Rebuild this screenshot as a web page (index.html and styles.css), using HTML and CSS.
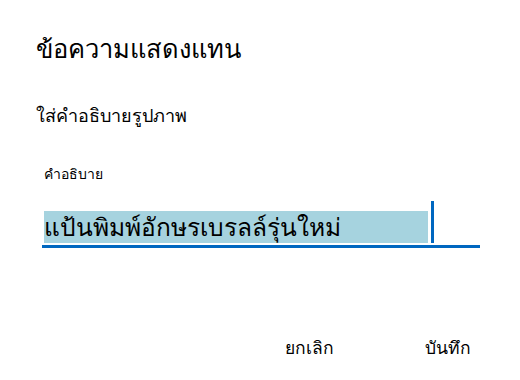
FILE: index.html
```html
<!DOCTYPE html>
<html lang="th">

<head>
    <meta charset="UTF-8">
    <title>ข้อความแสดงแทน</title>
    <link rel="stylesheet" href="styles.css">
</head>

<body>
    <div class="dialog">
        <h2 class="dialog-title">ข้อความแสดงแทน</h2>
        <p class="dialog-hint">ใส่คำอธิบายรูปภาพ</p>

        <div class="field">
            <label class="field-label">คำอธิบาย</label>
            <div class="field-input">
                <span class="selected">แป้นพิมพ์อักษรเบรลล์รุ่นใหม่</span><span class="caret"></span>
            </div>
        </div>

        <div class="actions">
            <button class="btn">ยกเลิก</button>
            <button class="btn">บันทึก</button>
        </div>
    </div>
</body>

</html>
```

FILE: styles.css
```css
* {
    margin: 0;
    padding: 0;
    box-sizing: border-box;
}

body {
    font-family: 'Noto Sans', 'DejaVu Sans', sans-serif;
    background-color: #fff;
    color: #000;
    width: 520px;
    height: 380px;
    overflow: hidden;
}

.dialog {
    padding: 30px 40px 0 36px;
    display: flex;
    flex-direction: column;
}

.dialog-title {
    font-size: 25.5px;
    font-weight: normal;
    line-height: 36px;
}

.dialog-hint {
    margin-top: 36px;
    font-size: 18px;
    line-height: 26px;
}

.field {
    margin-top: 36px;
    padding-left: 8px;
}

.field-label {
    display: block;
    font-size: 14px;
    line-height: 20px;
}

.field-input {
    margin-top: 16px;
    margin-left: -2px;
    border-bottom: 3px solid #0067c0;
    display: flex;
    align-items: flex-end;
    height: 48px;
    padding-left: 2px;
    padding-bottom: 2px;
}

.selected {
    background-color: #a6d3df;
    font-size: 24.5px;
    line-height: 32px;
    width: 384px;
    white-space: nowrap;
}

.caret {
    width: 3px;
    height: 42px;
    margin-left: 3px;
    background-color: #0067c0;
}

.actions {
    margin-top: 86px;
    display: flex;
    justify-content: flex-end;
    gap: 91px;
    padding-right: 9px;
}

.btn {
    background: none;
    border: none;
    font-family: inherit;
    font-size: 17.5px;
    color: #000;
    cursor: pointer;
}
```
